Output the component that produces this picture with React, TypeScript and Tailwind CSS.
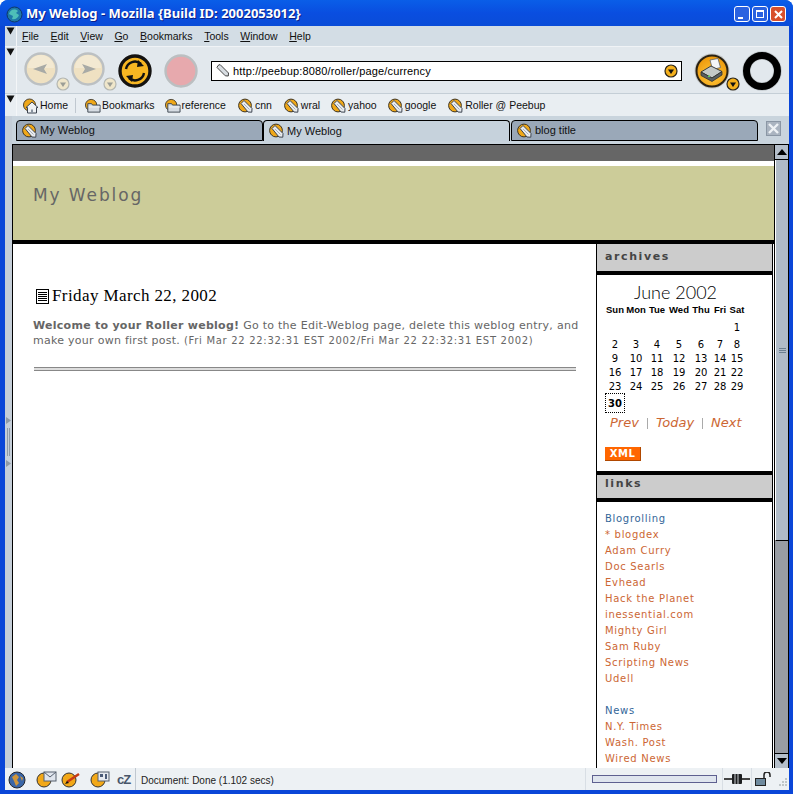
const ui = "font-['Liberation_Sans',sans-serif]";
const page = "font-['DejaVu_Sans',sans-serif]";

function Gripper() {
  return (
    <div className="flex h-full w-[12px] shrink-0 justify-center border-r border-[#f4f6f8] pt-[1px]">
      <svg width="9" height="8" viewBox="0 0 9 8">
        <path d="M0.5 0.5h8L4.5 7.5z" fill="#111" />
      </svg>
    </div>
  );
}

function SiteIcon() {
  return (
    <svg width="16" height="16" viewBox="0 0 16 16" className="shrink-0">
      <circle cx="7" cy="7.5" r="6.4" fill="#f0a818" stroke="#3e3524" strokeWidth="1" />
      <path d="M3 5.5L6 2.5l8 8-.2 3.7-3.8-.2z" fill="#e9ecef" stroke="#3c4450" strokeWidth="1" />
      <path d="M6 6l5.5 5.5" stroke="#a9b2bc" strokeWidth="1" />
    </svg>
  );
}

function FolderIcon() {
  return (
    <svg width="16" height="16" viewBox="0 0 17 16" className="shrink-0">
      <circle cx="6.5" cy="7" r="6" fill="#f0a818" stroke="#4a4030" strokeWidth="1" />
      <path d="M3 5.5h4l1 1.5h8v7.5H3z" fill="#d6dce3" stroke="#3c4450" strokeWidth="1" />
      <path d="M4 9h12" stroke="#f4f6f8" strokeWidth="1" />
    </svg>
  );
}

function HomeIcon() {
  return (
    <svg width="16" height="16" viewBox="0 0 16 16" className="shrink-0">
      <circle cx="6.5" cy="7" r="6" fill="#f0a818" stroke="#4a4030" strokeWidth="1" />
      <path d="M3 9.5L9 4l6 5.5h-1.5V15H4.5V9.5z" fill="#eef1f4" stroke="#3c4450" strokeWidth="1" />
      <path d="M8 15v-3.5h2V15" fill="#8a94a0" />
    </svg>
  );
}

function SmallDrop({ faded }: { faded?: boolean }) {
  return (
    <svg width="14" height="14" viewBox="0 0 14 14">
      <circle cx="7" cy="7" r="6" fill={faded ? "#efe6ca" : "#f4b01c"} stroke={faded ? "#b4b7b2" : "#2a2418"} strokeWidth="1.2" />
      <path d="M4 5.5h6L7 10z" fill={faded ? "#9c9e96" : "#111"} />
    </svg>
  );
}

function NavButton({ dir }: { dir: "back" | "forward" }) {
  return (
    <div className="relative h-[40px] w-[47px] shrink-0">
      <svg width="36" height="36" viewBox="0 0 36 36">
        <circle cx="18" cy="18" r="15.5" fill="#efe1c2" stroke="#bcc0c2" strokeWidth="2.4" />
        <path d="M5 17a13 13 0 0 1 26 0" fill="#f3e9d2" />
        {dir === "back" ? (
          <path d="M10 18l14-5-3 5 3 5z" fill="#a8aaa6" />
        ) : (
          <path d="M26 18l-14-5 3 5-3 5z" fill="#a8aaa6" />
        )}
      </svg>
      <div className="absolute left-[33px] top-[26px]">
        <SmallDrop faded />
      </div>
    </div>
  );
}

function ReloadButton() {
  return (
    <svg width="36" height="36" viewBox="0 0 36 36" className="shrink-0">
      <circle cx="18" cy="18" r="15" fill="#f7b622" stroke="#141210" strokeWidth="3.4" />
      <path d="M9 16a9 9 0 0 1 15-5" fill="none" stroke="#111" strokeWidth="2.4" />
      <path d="M27 20a9 9 0 0 1-15 5" fill="none" stroke="#111" strokeWidth="2.4" />
      <path d="M21 7l6 6-7 1zM15 29l-6-6 7-1z" fill="#111" />
    </svg>
  );
}

function StopButton() {
  return (
    <svg width="36" height="36" viewBox="0 0 36 36" className="shrink-0">
      <circle cx="18" cy="18" r="15.5" fill="#e7a9ad" stroke="#bbbfc1" strokeWidth="2.4" />
    </svg>
  );
}

function PrintButton() {
  return (
    <svg width="38" height="38" viewBox="0 0 38 38" className="shrink-0">
      <defs>
        <radialGradient id="printGold" cx="0.5" cy="0.65" r="0.6">
          <stop offset="0" stopColor="#ffc83c" />
          <stop offset="1" stopColor="#ee9a0c" />
        </radialGradient>
      </defs>
      <circle cx="19" cy="19" r="17.5" fill="#8c8a80" opacity="0.35" />
      <circle cx="19" cy="19" r="15.5" fill="url(#printGold)" stroke="#2a2214" strokeWidth="2" />
      <path d="M17 8l8-1.5 2.5 9-8 2z" fill="#f4f6f8" stroke="#5c6268" strokeWidth="0.8" />
      <path d="M8 20l10-6 11 5.5-10 6.5z" fill="#c4c9c8" stroke="#3a3e40" strokeWidth="1" />
      <path d="M8 20v3.5l11 6 10-6.500v-3.500l-10 6.500z" fill="#5a6062" stroke="#2e3030" strokeWidth="0.8" />
      <rect x="15" y="23.500" width="2" height="1.500" fill="#5fd05f" />
    </svg>
  );
}

function Throbber() {
  return (
    <svg width="42" height="42" viewBox="0 0 42 42" className="shrink-0">
      <circle cx="21" cy="21" r="15.5" fill="none" stroke="#aab0b4" strokeWidth="8.5" opacity="0.6" />
      <circle cx="21" cy="21" r="15.5" fill="none" stroke="#000" strokeWidth="7" />
    </svg>
  );
}

function Bookmark({ label, icon, ml }: { label: string; icon: React.ReactNode; ml: string }) {
  return (
    <div className={`flex items-center gap-[1px] ${ml}`}>
      {icon}
      <span className="text-[10.5px] text-[#111]">{label}</span>
    </div>
  );
}

function Tab({ label, active }: { label: string; active?: boolean }) {
  return (
    <div
      className={`flex h-[21px] w-[247px] shrink-0 items-center gap-[2px] rounded-t-[4px] border-x border-t border-black pl-[5px] ${
        active ? "bg-[#c6d2dc]" : "border-b bg-[#9aa8b8]"
      }`}
    >
      <SiteIcon />
      <span className="text-[11px] text-[#111]">{label}</span>
    </div>
  );
}

function Sidehead({ label, h }: { label: string; h: string }) {
  return (
    <div className={`${h} border-y-[4px] border-black bg-[#cccccc] pl-[8px] text-[11px] font-bold tracking-[1.6px] text-[#444]`}>
      {label}
    </div>
  );
}

const weeks = [
  ["", "", "", "", "", "", "1"],
  ["2", "3", "4", "5", "6", "7", "8"],
  ["9", "10", "11", "12", "13", "14", "15"],
  ["16", "17", "18", "19", "20", "21", "22"],
  ["23", "24", "25", "26", "27", "28", "29"],
];

const cols = "grid w-[140px] grid-cols-[20px_22px_20px_24px_20px_18px_16px]";

const blogroll = ["* blogdex", "Adam Curry", "Doc Searls", "Evhead", "Hack the Planet", "inessential.com", "Mighty Girl", "Sam Ruby", "Scripting News", "Udell"];
const news = ["N.Y. Times", "Wash. Post", "Wired News"];

function Sidebar() {
  return (
    <aside className="mr-px flex w-[177px] shrink-0 flex-col border-x border-black">
      <Sidehead label="archives" h="h-[35px] -mt-[4px] pt-[5px]" />
      <div className="h-[196px] px-[8px] pt-[6px] text-black">
        <div className="w-[141px] text-center font-['Lato',sans-serif] text-[18px] leading-[22px] font-light">June 2002</div>
        <div className={`${cols} mt-px text-center font-['Liberation_Sans',sans-serif] text-[9.5px] leading-[12px] font-bold`}>
          {["Sun", "Mon", "Tue", "Wed", "Thu", "Fri", "Sat"].map((d) => (
            <span key={d}>{d}</span>
          ))}
        </div>
        <div className={`${cols} mt-[5px] text-center text-[10px] leading-[14px]`}>
          {weeks.flat().map((d, i) => (
            <span key={i} className={i === 6 ? "mb-[3px]" : ""}>{d}</span>
          ))}
        </div>
        <div className="-mt-px flex h-[20px] w-[20px] items-center justify-center border border-dotted border-black text-[10px] font-bold">30</div>
        <div className="ml-[5px] mt-px flex items-center text-[13px] leading-[18px] text-[#cc6633] italic">
          <span>Prev</span>
          <span className="mx-[8px] h-[11px] w-px bg-[#aaa]" />
          <span>Today</span>
          <span className="mx-[8px] h-[11px] w-px bg-[#aaa]" />
          <span>Next</span>
        </div>
        <div className="mt-[15px] flex h-[14px] w-[36px] items-center justify-center border-b border-r border-[#b04800] bg-[#ff6600] text-[10px] font-bold tracking-[0.5px] text-white">XML</div>
      </div>
      <Sidehead label="links" h="h-[31px] pt-[1px]" />
      <div className="overflow-hidden pl-[8px] pt-[9px] text-[10px] leading-[16px] tracking-[0.7px] text-[#cc6633]">
        <div className="text-[#336699]">Blogrolling</div>
        {blogroll.map((l) => (
          <div key={l}>{l}</div>
        ))}
        <div className="mt-[16px] text-[#336699]">News</div>
        {news.map((l) => (
          <div key={l}>{l}</div>
        ))}
      </div>
    </aside>
  );
}

function Scrollbar() {
  return (
    <div className="flex w-[14px] shrink-0 flex-col border-r border-black bg-[#999da3]">
      <div className="flex h-[15px] items-center justify-center border-b border-black bg-[#b5bfca]">
        <svg width="10" height="6" viewBox="0 0 10 6"><path d="M5 0l5 6H0z" fill="#000" /></svg>
      </div>
      <div className="flex h-[381px] items-center justify-center border-b border-black border-l border-l-white bg-[#b0bbc7]">
        <div className="flex w-[7px] flex-col gap-[1px]">
          <div className="h-px bg-[#6c8090]" />
          <div className="h-px bg-[#6c8090]" />
          <div className="h-px bg-[#6c8090]" />
        </div>
      </div>
      <div className="flex-1" />
      <div className="flex h-[15px] items-center justify-center border-t border-black bg-[#b5bfca]">
        <svg width="10" height="6" viewBox="0 0 10 6"><path d="M5 6l5-6H0z" fill="#000" /></svg>
      </div>
    </div>
  );
}

function Content() {
  return (
    <div className={`${page} flex min-h-0 flex-1`}>
      <div className="flex min-w-0 flex-1 flex-col border-x border-black bg-white">
        <div className="h-[16px] shrink-0 bg-[#666666]" />
        <div className="h-[5px] shrink-0 bg-white" />
        <div className="h-[74px] shrink-0 bg-[#cccc99] pl-[20px] pt-[18px] text-[17px] leading-[22px] tracking-[1.9px] text-[#666]">
          My Weblog
        </div>
        <div className="h-[4px] shrink-0 bg-black" />
        <div className="flex min-h-0 flex-1 overflow-hidden">
          <main className="min-w-0 flex-1 pl-[21px] pr-[20px] pt-[42px]">
            <div className="flex h-[20px] items-center">
              <svg width="13" height="15" viewBox="0 0 13 15" className="ml-[2px] shrink-0">
                <rect x="0.5" y="0.5" width="12" height="14" fill="#fff" stroke="#000" />
                <path d="M2 3.5h9M2 5.5h9M2 7.5h9M2 9.5h9M2 11.5h9" stroke="#000" />
              </svg>
              <span className="ml-[3px] font-['Liberation_Serif',serif] text-[17px] tracking-[0.4px] text-black">Friday March 22, 2002</span>
            </div>
            <p className="-ml-px -mr-[4px] mt-[12px] text-[11px] leading-[15px] tracking-[0.27px] text-[#666]">
              <b>Welcome to your Roller weblog!</b> Go to the Edit-Weblog page, delete this weblog entry, and make your own first post.{" "}
              <span className="text-[10px] tracking-[0.7px]">(Fri Mar 22 22:32:31 EST 2002/Fri Mar 22 22:32:31 EST 2002)</span>
            </p>
            <div className="mt-[19px] h-[4px] border-y border-[#888] bg-[#ddd]" />
          </main>
          <Sidebar />
        </div>
      </div>
      <Scrollbar />
    </div>
  );
}

function Status() {
  return (
    <div className={`${ui} flex h-[22px] shrink-0 items-center bg-[#edf1f4] text-[10px] text-[#222]`}>
      <div className="flex h-full w-[131px] shrink-0 items-center border-r border-[#c0c8d0] pl-[3px] pt-px">
        <svg width="18" height="18" viewBox="0 0 18 18" className="shrink-0">
          <circle cx="9" cy="9" r="8" fill="#3a66a8" stroke="#23262c" />
          <path d="M4 6l4-3 3 3-2 3 2 3-3 3-2-5zM12 5l3 2-1 3z" fill="#d0963a" />
        </svg>
        <div className="ml-[10px]">
          <svg width="21" height="17" viewBox="0 0 21 17">
            <circle cx="8" cy="9" r="7" fill="#f2a818" stroke="#333" />
            <rect x="8" y="1" width="12" height="9" fill="#dfe5ee" stroke="#56606e" />
            <path d="M8 1l6 5 6-5" fill="none" stroke="#56606e" />
          </svg>
        </div>
        <div className="ml-[4px]">
          <svg width="21" height="17" viewBox="0 0 21 17">
            <circle cx="8" cy="9" r="7" fill="#f2a818" stroke="#333" />
            <path d="M6 11l12-8" stroke="#c63a14" strokeWidth="2.4" />
            <path d="M4 13l2-3 2 2z" fill="#111" />
          </svg>
        </div>
        <div className="ml-[8px]">
          <svg width="21" height="17" viewBox="0 0 21 17">
            <circle cx="8" cy="9" r="7" fill="#f2a818" stroke="#333" />
            <rect x="8" y="1" width="11" height="9" fill="#e6eaf0" stroke="#56606e" />
            <path d="M10 3h3v3h-3zM15 3h2v5h-2z" fill="#4a5a78" />
          </svg>
        </div>
        <span className="ml-[6px] text-[13px] leading-none font-bold tracking-[-1px] text-[#48566a]">cZ</span>
      </div>
      <span className="ml-[5px] flex-1 pt-[2px]">Document: Done (1.102 secs)</span>
      <div className="flex h-full w-[138px] shrink-0 items-center border-x border-[#d8dee4] pl-[6px]">
        <div className="h-[8px] w-[125px] border border-[#5e6090] bg-[#dfe5ee]" />
      </div>
      <div className="flex h-full w-[29px] shrink-0 items-center justify-center border-r border-[#d8dee4]">
        <svg width="26" height="12" viewBox="0 0 26 12">
          <path d="M0 6h26" stroke="#444" strokeWidth="2" />
          <rect x="8" y="1" width="10" height="10" rx="1" fill="#1c1e20" />
          <path d="M11 1v10M14 1v10" stroke="#c8ccd0" />
        </svg>
      </div>
      <div className="ml-[3px] w-[23px] shrink-0">
        <svg width="17" height="14" viewBox="0 0 17 14">
          <rect x="0.5" y="6.5" width="10" height="7" fill="#6f8a9e" stroke="#222" />
          <path d="M9 6V3a3 3 0 0 1 6 0v2" fill="none" stroke="#222" strokeWidth="1.5" />
        </svg>
      </div>
      <svg width="11" height="11" viewBox="0 0 11 11" className="mt-[6px] shrink-0">
        <path d="M7 1h2v2H7zM4 4h2v2H4zM7 4h2v2H7zM1 7h2v2H1zM4 7h2v2H4zM7 7h2v2H7z" fill="#bfc6c8" />
      </svg>
    </div>
  );
}

export default function App() {
  return (
    <div className="flex h-[794px] w-[793px] flex-col overflow-hidden rounded-t-[8px] bg-[#0a46d8] pb-[4px] pl-[5px] pr-[4px]">
      <div className="-ml-[5px] -mr-[4px] flex h-[26px] shrink-0 items-center bg-gradient-to-b from-[#0a5ee8] via-[#0a4ee0] to-[#0a4cd8] pl-[6px] pr-[7px] pt-[2px]">
        <svg width="17" height="17" viewBox="0 0 17 17" className="shrink-0">
          <circle cx="8.5" cy="8.5" r="7.5" fill="#1e78a8" stroke="#0e3868" />
          <path d="M3 8c1-4 5-6 9-3l-2 2 3 2c-1 3-4 5-7 4l1-3z" fill="#4ec0b8" />
        </svg>
        <span className="ml-[3px] font-['Noto_Sans',sans-serif] text-[13px] font-bold text-white [text-shadow:1px_1px_0_#0a1f88]">
          My Weblog - Mozilla {"{"}Build ID: 2002053012{"}"}
        </span>
        <div className="ml-auto flex gap-[2px]">
          <div className="flex h-[16px] w-[16px] items-end justify-start rounded-[3px] border border-white bg-[#2a62e0] pb-[2px] pl-[3px]">
            <div className="h-[2px] w-[5px] bg-white" />
          </div>
          <div className="flex h-[16px] w-[16px] items-center justify-center rounded-[3px] border border-white bg-[#2a62e0]">
            <div className="h-[8px] w-[8px] border border-t-2 border-white" />
          </div>
          <div className="flex h-[16px] w-[16px] items-center justify-center rounded-[3px] border border-white bg-[#d8502c]">
            <svg width="9" height="9" viewBox="0 0 9 9"><path d="M1 1l7 7M8 1L1 8" stroke="#fff" strokeWidth="2" /></svg>
          </div>
        </div>
      </div>

      <div className={`${ui} flex h-[21px] shrink-0 items-stretch border-b border-[#f0f3f6] bg-[#d3dde5]`}>
        <Gripper />
        <nav className="flex items-center gap-[11.6px] pl-[5px] pt-px text-[10.5px] text-[#111]">
          {["File", "Edit", "View", "Go", "Bookmarks", "Tools", "Window", "Help"].map((m) => (
            <span key={m}>
              <span className="underline">{m[0]}</span>
              {m.slice(1)}
            </span>
          ))}
        </nav>
      </div>

      <div className={`${ui} flex h-[47px] shrink-0 items-stretch border-b border-[#c4ced6] bg-[#e2e8ed]`}>
        <Gripper />
        <div className="flex flex-1 items-center pl-[6px] pt-[2px]">
          <NavButton dir="back" />
          <NavButton dir="forward" />
          <ReloadButton />
          <div className="ml-[10px]">
            <StopButton />
          </div>
          <div className="ml-[12px] flex h-[20px] w-[471px] shrink-0 items-center border-[1.5px] border-black bg-white pl-[4px] pr-[3px]">
            <svg width="14" height="14" viewBox="0 0 14 14" className="shrink-0">
              <path d="M2 1.5l2-1 8.5 8.5-.2 3-3-.2L1 3.5z" fill="#d8dde2" stroke="#444" />
            </svg>
            <span className="ml-[3px] text-[11px] tracking-[0.15px] text-black">http://peebup:8080/roller/page/currency</span>
            <div className="ml-auto">
              <SmallDrop />
            </div>
          </div>
          <div className="relative ml-[11px] h-[38px] w-[44px] shrink-0">
            <PrintButton />
            <div className="absolute left-[33px] top-[25px]">
              <SmallDrop />
            </div>
          </div>
          <div className="ml-[4px]">
            <Throbber />
          </div>
        </div>
      </div>

      <div className={`${ui} flex h-[22px] shrink-0 items-stretch bg-[#e9eef2]`}>
        <Gripper />
        <div className="flex items-center pl-[6px] pt-px">
          <Bookmark label="Home" icon={<HomeIcon />} ml="" />
          <div className="ml-[7px] h-[15px] w-px bg-[#c0c8d0]" />
          <Bookmark label="Bookmarks" icon={<FolderIcon />} ml="ml-[9px]" />
          <Bookmark label="reference" icon={<FolderIcon />} ml="ml-[10px]" />
          <Bookmark label="cnn" icon={<SiteIcon />} ml="ml-[12px]" />
          <Bookmark label="wral" icon={<SiteIcon />} ml="ml-[12px]" />
          <Bookmark label="yahoo" icon={<SiteIcon />} ml="ml-[11px]" />
          <Bookmark label="google" icon={<SiteIcon />} ml="ml-[11px]" />
          <Bookmark label="Roller @ Peebup" icon={<SiteIcon />} ml="ml-[12px]" />
        </div>
      </div>

      <div className="flex min-h-0 flex-1 bg-[#c9d4dd]">
        <div className="flex w-[7px] shrink-0 flex-col items-center justify-center gap-[4px] bg-[#c5ced8]">
          <svg width="5" height="7" viewBox="0 0 5 7"><path d="M0 0l5 3.5L0 7z" fill="#8f9aa6" /></svg>
          <div className="h-[28px] w-[3px] border-x border-[#8f9aa6]" />
          <svg width="5" height="7" viewBox="0 0 5 7"><path d="M0 0l5 3.5L0 7z" fill="#8f9aa6" /></svg>
        </div>
        <div className="flex min-w-0 flex-1 flex-col">
          <div className={`${ui} flex h-[29px] shrink-0 items-start border-b border-black pl-[4px] pt-[4px]`}>
            <Tab label="My Weblog" />
            <Tab label="My Weblog" active />
            <div className="ml-px">
              <Tab label="blog title" />
            </div>
            <div className="ml-[8px] mt-px flex h-[15px] w-[15px] items-center justify-center border border-[#8a96a4] bg-[#aab4c0]">
              <svg width="11" height="11" viewBox="0 0 11 11"><path d="M1 1l9 9M10 1l-9 9" stroke="#eef2f5" strokeWidth="2.4" /></svg>
            </div>
          </div>
          <Content />
        </div>
      </div>

      <Status />
    </div>
  );
}
